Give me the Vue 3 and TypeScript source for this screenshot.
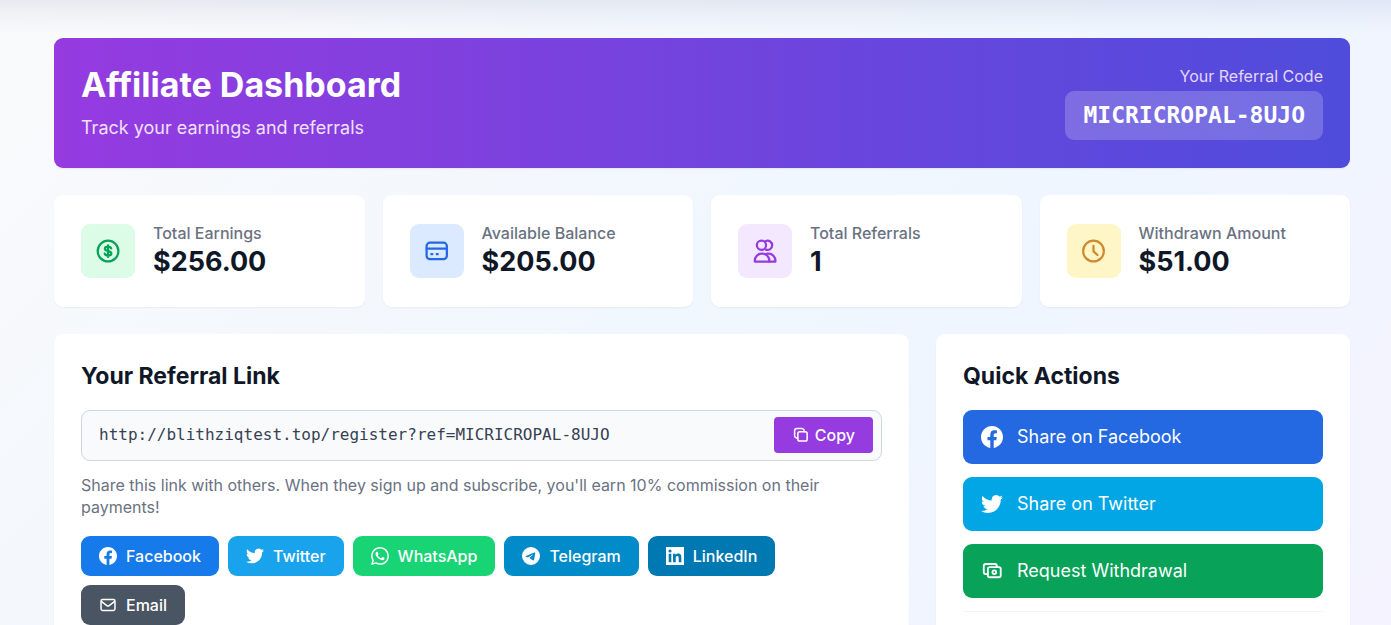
<script setup lang="ts">
import { ref } from 'vue'

interface Stat {
  icon: 'dollar' | 'card' | 'users' | 'clock'
  tone: string
  label: string
  value: string
}

const referralCode = 'MICRICROPAL-8UJO'
const referralLink = ref('http://blithziqtest.top/register?ref=' + referralCode)

const stats: Stat[] = [
  { icon: 'dollar', tone: 'green', label: 'Total Earnings', value: '$256.00' },
  { icon: 'card', tone: 'blue', label: 'Available Balance', value: '$205.00' },
  { icon: 'users', tone: 'purple', label: 'Total Referrals', value: '1' },
  { icon: 'clock', tone: 'yellow', label: 'Withdrawn Amount', value: '$51.00' },
]

const brandPaths: Record<string, string> = {
  facebook:
    'M24 12.073c0-6.627-5.373-12-12-12s-12 5.373-12 12c0 5.99 4.388 10.954 10.125 11.854v-8.385H7.078v-3.47h3.047V9.43c0-3.007 1.792-4.669 4.533-4.669 1.312 0 2.686.235 2.686.235v2.953H15.83c-1.491 0-1.956.925-1.956 1.874v2.25h3.328l-.532 3.47h-2.796v8.385C19.612 23.027 24 18.062 24 12.073z',
  twitter:
    'M23.953 4.57a10 10 0 01-2.825.775 4.958 4.958 0 002.163-2.723c-.951.555-2.005.959-3.127 1.184a4.92 4.92 0 00-8.384 4.482C7.69 8.095 4.067 6.13 1.64 3.162a4.822 4.822 0 00-.666 2.475c0 1.71.87 3.213 2.188 4.096a4.904 4.904 0 01-2.228-.616v.06a4.923 4.923 0 003.946 4.827 4.996 4.996 0 01-2.212.085 4.936 4.936 0 004.604 3.417 9.867 9.867 0 01-6.102 2.105c-.39 0-.779-.023-1.17-.067a13.995 13.995 0 007.557 2.209c9.053 0 13.998-7.496 13.998-13.985 0-.21 0-.42-.015-.63A9.935 9.935 0 0024 4.59z',
  whatsapp:
    'M17.472 14.382c-.297-.149-1.758-.867-2.03-.967-.273-.099-.471-.148-.67.15-.197.297-.767.966-.94 1.164-.173.199-.347.223-.644.075-.297-.15-1.255-.463-2.39-1.475-.883-.788-1.48-1.761-1.653-2.059-.173-.297-.018-.458.13-.606.134-.133.298-.347.446-.52.149-.174.198-.298.298-.497.099-.198.05-.371-.025-.52-.075-.149-.669-1.612-.916-2.207-.242-.579-.487-.5-.669-.51-.173-.008-.371-.01-.57-.01-.198 0-.52.074-.792.372-.272.297-1.04 1.016-1.04 2.479 0 1.462 1.065 2.875 1.213 3.074.149.198 2.096 3.2 5.077 4.487.709.306 1.262.489 1.694.625.712.227 1.36.195 1.871.118.571-.085 1.758-.719 2.006-1.413.248-.694.248-1.289.173-1.413-.074-.124-.272-.198-.57-.347m-5.421 7.403h-.004a9.87 9.87 0 01-5.031-1.378l-.361-.214-3.741.982.998-3.648-.235-.374a9.86 9.86 0 01-1.51-5.26c.001-5.45 4.436-9.884 9.888-9.884 2.64 0 5.122 1.03 6.988 2.898a9.825 9.825 0 012.893 6.994c-.003 5.45-4.437 9.884-9.885 9.884m8.413-18.297A11.815 11.815 0 0012.05 0C5.495 0 .16 5.335.157 11.892c0 2.096.547 4.142 1.588 5.945L.057 24l6.305-1.654a11.882 11.882 0 005.683 1.448h.005c6.554 0 11.89-5.335 11.893-11.893a11.821 11.821 0 00-3.48-8.413z',
  telegram:
    'M11.944 0A12 12 0 0 0 0 12a12 12 0 0 0 12 12 12 12 0 0 0 12-12A12 12 0 0 0 12 0a12 12 0 0 0-.056 0zm4.962 7.224c.1-.002.321.023.465.14a.506.506 0 0 1 .171.325c.016.093.036.306.02.472-.18 1.898-.962 6.502-1.36 8.627-.168.9-.499 1.201-.82 1.23-.696.065-1.225-.46-1.9-.902-1.056-.693-1.653-1.124-2.678-1.8-1.185-.78-.417-1.21.258-1.91.177-.184 3.247-2.977 3.307-3.23.007-.032.014-.15-.056-.212s-.174-.041-.249-.024c-.106.024-1.793 1.14-5.061 3.345-.48.33-.913.49-1.302.48-.428-.008-1.252-.241-1.865-.44-.752-.245-1.349-.374-1.297-.789.027-.216.325-.437.893-.663 3.498-1.524 5.83-2.529 6.998-3.014 3.332-1.386 4.025-1.627 4.476-1.635z',
  linkedin:
    'M0 0H24V24H0zM7.1 20.4V9H3.6V20.4zM5.34 7.43a2.06 2.06 0 1 0 0-4.12 2.06 2.06 0 0 0 0 4.12zM20.45 20.45v-6.24c0-3.06-.66-5.42-4.24-5.42-1.72 0-2.87.94-3.34 1.84h-.05V9H9.4v11.45h3.56v-5.66c0-1.5.28-2.94 2.13-2.94 1.83 0 1.85 1.7 1.85 3.03v5.57z',
}

const shares = [
  { id: 'facebook', label: 'Facebook' },
  { id: 'twitter', label: 'Twitter' },
  { id: 'whatsapp', label: 'WhatsApp' },
  { id: 'telegram', label: 'Telegram' },
  { id: 'linkedin', label: 'LinkedIn' },
  { id: 'email', label: 'Email' },
]

const actions = [
  { id: 'facebook', tone: 'act-blue', label: 'Share on Facebook' },
  { id: 'twitter', tone: 'act-sky', label: 'Share on Twitter' },
  { id: 'withdraw', tone: 'act-green', label: 'Request Withdrawal' },
]

function copyLink(): void {
  navigator.clipboard?.writeText(referralLink.value)
}
</script>

<template>
  <div class="page">
    <div class="top-shade" aria-hidden="true"></div>
    <main class="content">
      <header class="hero">
        <div class="hero-text">
          <h1>Affiliate Dashboard</h1>
          <p>Track your earnings and referrals</p>
        </div>
        <div class="code">
          <p class="code-label">Your Referral Code</p>
          <p class="code-value">{{ referralCode }}</p>
        </div>
      </header>

      <section class="stats">
        <article v-for="s in stats" :key="s.label" class="stat">
          <div class="stat-icon" :class="s.tone">
            <svg viewBox="0 0 24 24" class="line">
              <template v-if="s.icon === 'dollar'">
                <circle cx="11.6" cy="11.6" r="9.2" />
                <path d="M14.4 9.3c-.3-1-1.300-1.600-2.800-1.600-1.600 0-2.800.6-2.800 1.800 0 1.300 1.200 1.700 2.800 2.100 1.700.4 2.900.9 2.900 2.100 0 1.200-1.200 1.900-2.900 1.900-1.500 0-2.600-.6-2.900-1.700M11.600 6.500v10.300" />
              </template>
              <template v-else-if="s.icon === 'card'">
                <rect x="3.200" y="4.200" width="18" height="14.600" rx="3" />
                <path d="M3.200 9.400h18M7.400 14.400h.9M12.200 14.400h.9" />
              </template>
              <template v-else-if="s.icon === 'users'">
                <circle cx="8.400" cy="6.500" r="4.100" />
                <path d="M12.300 2.700a4.100 4.100 0 1 1 0 7.600" />
                <path d="M2.500 20.900v-.8a6 6.200 0 0 1 6-6.200h.9a6 6.200 0 0 1 6 6.200v.8z" />
                <path d="M13.400 13.900h1.400a6 6.200 0 0 1 6 6.200v.8h-5.400" />
              </template>
              <template v-else>
                <circle cx="12" cy="11.600" r="9.200" />
                <path d="M12 7v4.900l3.500 3.200" />
              </template>
            </svg>
          </div>
          <div>
            <p class="stat-label">{{ s.label }}</p>
            <p class="stat-value">{{ s.value }}</p>
          </div>
        </article>
      </section>

      <div class="panels">
        <section class="panel">
          <h2>Your Referral Link</h2>
          <div class="link-box">
            <input v-model="referralLink" type="text" readonly aria-label="Your Referral Link" />
            <button type="button" class="copy" @click="copyLink">
              <svg viewBox="0 0 24 24" class="line">
                <rect x="7.800" y="7.600" width="12.400" height="12.400" rx="2.500" />
                <path d="M7.800 15.900h-1.300a3 3 0 0 1-3-3V6.400a3 3 0 0 1 3-3h6.700a3 3 0 0 1 3 3v1.200" />
              </svg>
              Copy
            </button>
          </div>
          <p class="note">
            Share this link with others. When they sign up and subscribe, you'll earn 10% commission on their payments!
          </p>
          <div class="shares">
            <button v-for="s in shares" :key="s.id" type="button" class="share" :class="s.id">
              <svg v-if="s.id === 'email'" viewBox="0 0 24 24" class="line">
                <rect x="2.700" y="4.600" width="18.600" height="14.600" rx="2.200" />
                <path d="M3.500 7.500l7 5.300a2.500 2.500 0 0 0 3 0l7-5.300" />
              </svg>
              <svg v-else viewBox="0 0 24 24" class="solid"><path :d="brandPaths[s.id]" /></svg>
              {{ s.label }}
            </button>
          </div>
        </section>

        <section class="panel">
          <h2>Quick Actions</h2>
          <div class="actions">
            <button v-for="a in actions" :key="a.id" type="button" class="action" :class="a.tone">
              <svg v-if="a.id === 'withdraw'" viewBox="0 0 24 24" class="line">
                <rect x="7.500" y="7.800" width="14" height="11" rx="2" />
                <circle cx="14.500" cy="13.300" r="2" />
                <path d="M7.500 15.400H5.300a2.300 2.300 0 0 1-2.300-2.300V6.700a2.300 2.300 0 0 1 2.300-2.300h9.700a2.300 2.300 0 0 1 2.300 2.300v1.100" />
              </svg>
              <svg v-else viewBox="0 0 24 24" class="solid"><path :d="brandPaths[a.id]" /></svg>
              {{ a.label }}
            </button>
            <hr />
          </div>
        </section>
      </div>
    </main>
  </div>
</template>

<style>
body {
  margin: 0;
}
</style>

<style scoped>
.page {
  position: relative;
  min-height: 100vh;
  box-sizing: border-box;
  padding: 38px 41px 27px 54px;
  font-family: Inter, "Liberation Sans", sans-serif;
  font-size: 18px;
  line-height: 27px;
  color: #101828;
  background: linear-gradient(135deg, #f9fafb 0%, #eff6ff 60%, #f5f3ff 100%);
}
.top-shade {
  position: absolute;
  inset: 0 0 auto;
  height: 34px;
  background: linear-gradient(rgba(40, 45, 110, 0.08), rgba(40, 45, 110, 0.04) 40%, rgba(40, 45, 110, 0));
}
.content {
  position: relative;
  display: flex;
  flex-direction: column;
  gap: 27px;
}
h1,
h2,
p {
  margin: 0;
}
svg {
  display: block;
  flex: none;
}
.line {
  fill: none;
  stroke: currentColor;
  stroke-width: 2;
  stroke-linecap: round;
  stroke-linejoin: round;
}
.solid {
  fill: currentColor;
  fill-rule: evenodd;
}
button {
  font: inherit;
  border: 0;
  color: #fff;
  cursor: pointer;
  display: flex;
  align-items: center;
}
.hero {
  display: flex;
  justify-content: space-between;
  align-items: flex-start;
  padding: 27px;
  border-radius: 9px;
  color: #fff;
  background: linear-gradient(90deg, #953be0, #4f4cdb);
  box-shadow: 0 1px 2px rgba(0, 0, 0, 0.06);
}
h1 {
  font-size: 34px;
  line-height: 40px;
  font-weight: 700;
}
.hero-text p {
  margin-top: 9px;
  color: #f0e0fd;
}
.code {
  text-align: right;
}
.code-label {
  font-size: 16px;
  line-height: 22px;
  color: #e6d6fb;
}
.code-value {
  margin-top: 4px;
  padding: 9px 18px;
  border-radius: 9px;
  background: rgba(255, 255, 255, 0.2);
  font-family: "DejaVu Sans Mono", monospace;
  font-size: 23px;
  line-height: 31px;
  font-weight: 700;
}
.stats {
  display: grid;
  grid-template-columns: repeat(4, 1fr);
  gap: 18px;
}
.stat,
.panel {
  background: #fff;
  border-radius: 9px;
  box-shadow: 0 1px 2px rgba(0, 0, 0, 0.05);
}
.stat {
  display: flex;
  align-items: center;
  gap: 18px;
  padding: 27px;
}
.stat-icon {
  display: grid;
  place-items: center;
  width: 54px;
  height: 54px;
  border-radius: 9px;
}
.stat-icon svg {
  width: 27px;
  height: 27px;
}
.green {
  background: #dcfce7;
  color: #08a35a;
}
.blue {
  background: #dbeafe;
  color: #2468e8;
}
.purple {
  background: #f3e8ff;
  color: #953be0;
}
.yellow {
  background: #fef6c6;
  color: #d08a2e;
}
.stat-label {
  font-size: 16px;
  line-height: 22px;
  font-weight: 500;
  color: #6a7282;
}
.stat-value {
  font-size: 27px;
  line-height: 36px;
  font-weight: 700;
}
.panels {
  display: grid;
  grid-template-columns: repeat(3, 1fr);
  gap: 27px;
}
.panel {
  padding: 27px;
}
.panel:first-child {
  grid-column: span 2;
}
h2 {
  margin-bottom: 18px;
  font-size: 23px;
  line-height: 31px;
  font-weight: 700;
}
.link-box {
  display: flex;
  align-items: center;
  padding: 6px 8px 7px 17px;
  border: 1px solid #d1d5dc;
  border-radius: 9px;
  background: #f9fafb;
}
.link-box input {
  flex: 1;
  min-width: 0;
  padding: 0;
  border: 0;
  outline: 0;
  background: none;
  color: #364153;
  font-family: "DejaVu Sans Mono", monospace;
  font-size: 16px;
  line-height: 22px;
}
.copy {
  gap: 5px;
  padding: 7px 18px;
  border-radius: 4px;
  background: #953be0;
  font-size: 16px;
  line-height: 22px;
  font-weight: 500;
}
.copy svg,
.share svg {
  width: 18px;
  height: 18px;
}
.note {
  margin-top: 13px;
  font-size: 16px;
  line-height: 22px;
  color: #6a7282;
}
.shares {
  display: flex;
  flex-wrap: wrap;
  gap: 9px;
  margin-top: 18px;
}
.share {
  gap: 9px;
  padding: 9px 18px;
  border-radius: 9px;
  font-size: 16px;
  line-height: 22px;
  font-weight: 500;
}
.facebook {
  background: #167aea;
}
.twitter {
  background: #18a3ec;
}
.whatsapp {
  background: #18d475;
}
.telegram {
  background: #018bc8;
}
.linkedin {
  background: #0078b2;
}
.email {
  background: #4a5563;
}
.actions {
  display: flex;
  flex-direction: column;
  gap: 13px;
}
.action {
  gap: 14px;
  padding: 13px 18px;
  border-radius: 9px;
  line-height: 28px;
}
.action svg {
  width: 22px;
  height: 22px;
}
.act-blue {
  background: #2468e2;
}
.act-sky {
  background: #02a6e5;
}
.act-green {
  background: #08a258;
}
hr {
  width: 100%;
  margin: 0;
  border: 0;
  border-top: 1px solid #f3f4f6;
}
</style>
